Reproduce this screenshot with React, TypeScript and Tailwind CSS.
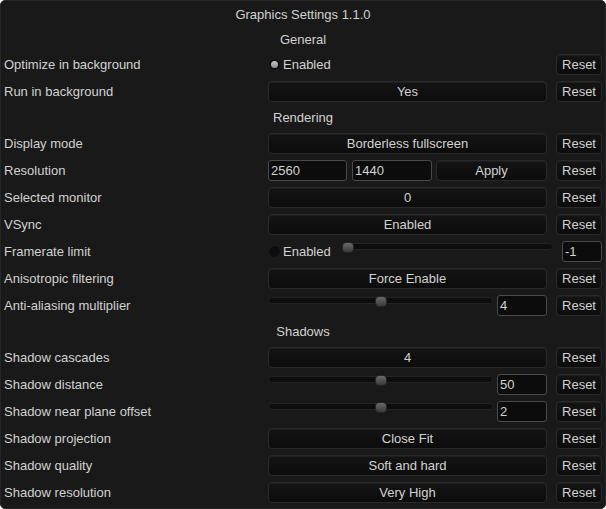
import React from 'react';

type Row =
  | { kind: 'header'; text: string; h?: string }
  | { kind: 'button'; label: string; value: string }
  | { kind: 'toggle'; label: string; on: boolean }
  | { kind: 'slider'; label: string; value: string; pos: number }
  | { kind: 'resolution'; label: string }
  | { kind: 'framerate'; label: string };

const rows: Row[] = [
  { kind: 'header', text: 'General', h: 'h-[17px]' },
  { kind: 'toggle', label: 'Optimize in background', on: true },
  { kind: 'button', label: 'Run in background', value: 'Yes' },
  { kind: 'header', text: 'Rendering' },
  { kind: 'button', label: 'Display mode', value: 'Borderless fullscreen' },
  { kind: 'resolution', label: 'Resolution' },
  { kind: 'button', label: 'Selected monitor', value: '0' },
  { kind: 'button', label: 'VSync', value: 'Enabled' },
  { kind: 'framerate', label: 'Framerate limit' },
  { kind: 'button', label: 'Anisotropic filtering', value: 'Force Enable' },
  { kind: 'slider', label: 'Anti-aliasing multiplier', value: '4', pos: 50 },
  { kind: 'header', text: 'Shadows' },
  { kind: 'button', label: 'Shadow cascades', value: '4' },
  { kind: 'slider', label: 'Shadow distance', value: '50', pos: 50 },
  { kind: 'slider', label: 'Shadow near plane offset', value: '2', pos: 50 },
  { kind: 'button', label: 'Shadow projection', value: 'Close Fit' },
  { kind: 'button', label: 'Shadow quality', value: 'Soft and hard' },
  { kind: 'button', label: 'Shadow resolution', value: 'Very High' },
];

const Btn = ({ text, className = '' }: { text: string; className?: string }) => (
  <div
    className={`h-[21px] flex items-center justify-center rounded-[4px] border border-[#2a2a2a] bg-linear-to-b from-[#141414] to-[#0c0c0c] shadow-[inset_0_1px_0_#1e1e1e] text-[#d2d2d2] ${className}`}
  >
    {text}
  </div>
);

const Field = ({ text, className = '' }: { text: string; className?: string }) => (
  <div
    className={`h-[21px] flex items-center rounded-[3px] border border-[#4a4a4a] bg-[#0c0c0c] pl-[2px] text-[#d2d2d2] ${className}`}
  >
    {text}
  </div>
);

const Slider = ({ pos, className = '' }: { pos: number; className?: string }) => (
  <div className={`relative h-[21px] ${className}`}>
    <div className="absolute left-0 right-0 top-[2px] h-[7px] rounded-full bg-[#0d0d0d] border border-[#232323]" />
    <div
      className="absolute top-[1px] h-[11px] w-[12px] rounded-[4px] border border-[#262626] bg-linear-to-b from-[#6a6a6a] to-[#3a3a3a]"
      style={{ left: `calc((100% - 12px) * ${pos / 100})` }}
    />
  </div>
);

const Toggle = ({ on }: { on: boolean }) => (
  <div className="w-[13px] h-[13px] rounded-full bg-[#0e0e0e] border border-[#1f1f1f] flex items-center justify-center">
    {on && <div className="w-[7px] h-[7px] rounded-full bg-linear-to-b from-[#c8c8c8] to-[#8a8a8a]" />}
  </div>
);

const Reset = () => <Btn text="Reset" className="w-[46px] ml-[9px]" />;

function Control({ row }: { row: Row }) {
  switch (row.kind) {
    case 'button':
      return (
        <>
          <Btn text={row.value} className="w-[279px]" />
          <Reset />
        </>
      );
    case 'toggle':
      return (
        <>
          <div className="w-[279px] flex items-center gap-[2px]">
            <Toggle on={row.on} />
            <span className="text-[#d2d2d2]">Enabled</span>
          </div>
          <Reset />
        </>
      );
    case 'resolution':
      return (
        <>
          <div className="w-[279px] flex">
            <Field text="2560" className="w-[79px]" />
            <Field text="1440" className="w-[80px] ml-[5px]" />
            <Btn text="Apply" className="w-[111px] ml-[4px]" />
          </div>
          <Reset />
        </>
      );
    case 'slider':
      return (
        <>
          <div className="w-[279px] flex">
            <Slider pos={row.pos} className="w-[225px]" />
            <Field text={row.value} className="w-[50px] ml-[4px]" />
          </div>
          <Reset />
        </>
      );
    case 'framerate':
      return (
        <>
          <div className="w-[74px] flex items-center gap-[2px]">
            <Toggle on={false} />
            <span className="text-[#d2d2d2]">Enabled</span>
          </div>
          <Slider pos={0} className="w-[211px]" />
          <Field text="-1" className="w-[40px] ml-[9px]" />
        </>
      );
    default:
      return null;
  }
}

export default function App() {
  return (
    <div className="w-[606px] h-[509px] bg-[#191919] rounded-[5px] border border-[#262626] font-['Liberation_Sans',Arial,sans-serif] text-[13px] text-[#d2d2d2] flex flex-col gap-[6px] px-[3px] pt-[4px] overflow-hidden">
      <div className="h-[20px] flex items-center justify-center">Graphics Settings 1.1.0</div>
      {rows.map((row, i) =>
        row.kind === 'header' ? (
          <div key={i} className={`${row.h ?? 'h-[19px]'} flex items-center justify-center`}>
            {row.text}
          </div>
        ) : (
          <div key={i} className="h-[21px] flex items-center">
            <div className="w-[264px] whitespace-nowrap">{row.label}</div>
            <Control row={row} />
          </div>
        )
      )}
    </div>
  );
}
